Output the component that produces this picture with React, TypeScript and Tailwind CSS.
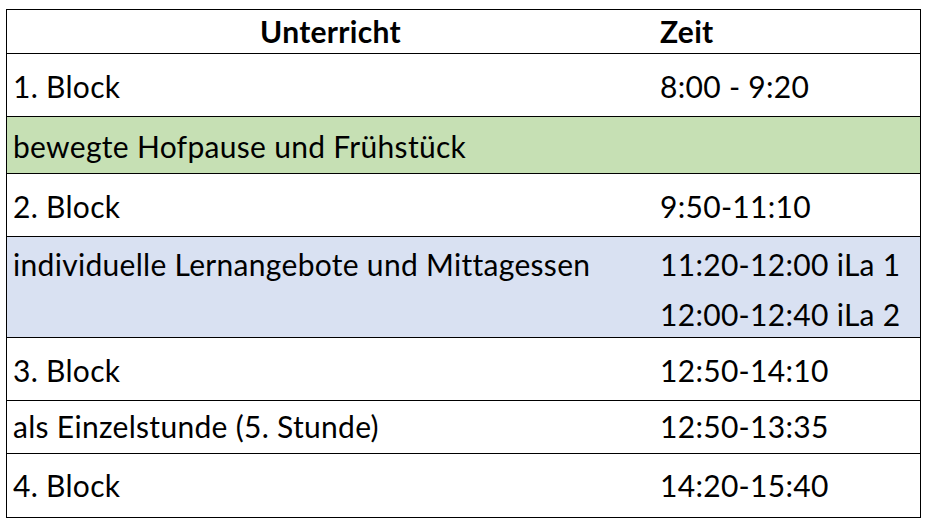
import React from 'react';

type Row = {
  label: string;
  times: string[];
  bg: string;
  h: string;
  pt: string;
};

const rows: Row[] = [
  { label: '1. Block', times: ['8:00 - 9:20'], bg: 'bg-white', h: 'h-[63px]', pt: 'pt-[7px]' },
  { label: 'bewegte Hofpause und Frühstück', times: [], bg: 'bg-[#c6e0b4]', h: 'h-[57px]', pt: 'pt-[4px]' },
  { label: '2. Block', times: ['9:50-11:10'], bg: 'bg-white', h: 'h-[63px]', pt: 'pt-[7px]' },
  {
    label: 'individuelle Lernangebote und Mittagessen',
    times: ['11:20-12:00 iLa 1', '12:00-12:40 iLa 2'],
    bg: 'bg-[#d9e1f2]',
    h: 'h-[101px]',
    pt: 'pt-[2px]',
  },
  { label: '3. Block', times: ['12:50-14:10'], bg: 'bg-white', h: 'h-[63px]', pt: 'pt-[7px]' },
  { label: 'als Einzelstunde (5. Stunde)', times: ['12:50-13:35'], bg: 'bg-white', h: 'h-[53px]', pt: 'pt-0' },
  { label: '4. Block', times: ['14:20-15:40'], bg: 'bg-white', h: 'h-[63px]', pt: 'pt-[6px]' },
];

export default function App() {
  return (
    <div className="w-[925px] h-[522px] bg-white pt-[9px] pl-[6px] font-['Lato',sans-serif] text-[30px] tracking-[0.3px] text-black">
      <div className="w-[915px] border border-black">
        <div className="flex h-[44px] items-center border-b border-black font-bold">
          <div className="w-[647px] text-center">Unterricht</div>
          <div className="pl-[6px]">Zeit</div>
        </div>
        {rows.map((r, i) => (
          <div
            key={i}
            className={`flex ${r.h} ${r.bg} ${r.pt} ${i < rows.length - 1 ? 'border-b border-black' : ''}`}
          >
            <div className="w-[647px] pl-[6px] leading-[50px]">{r.label}</div>
            <div className="pl-[6px] leading-[50px]">
              {r.times.map((t) => (
                <div key={t}>{t}</div>
              ))}
            </div>
          </div>
        ))}
      </div>
    </div>
  );
}
